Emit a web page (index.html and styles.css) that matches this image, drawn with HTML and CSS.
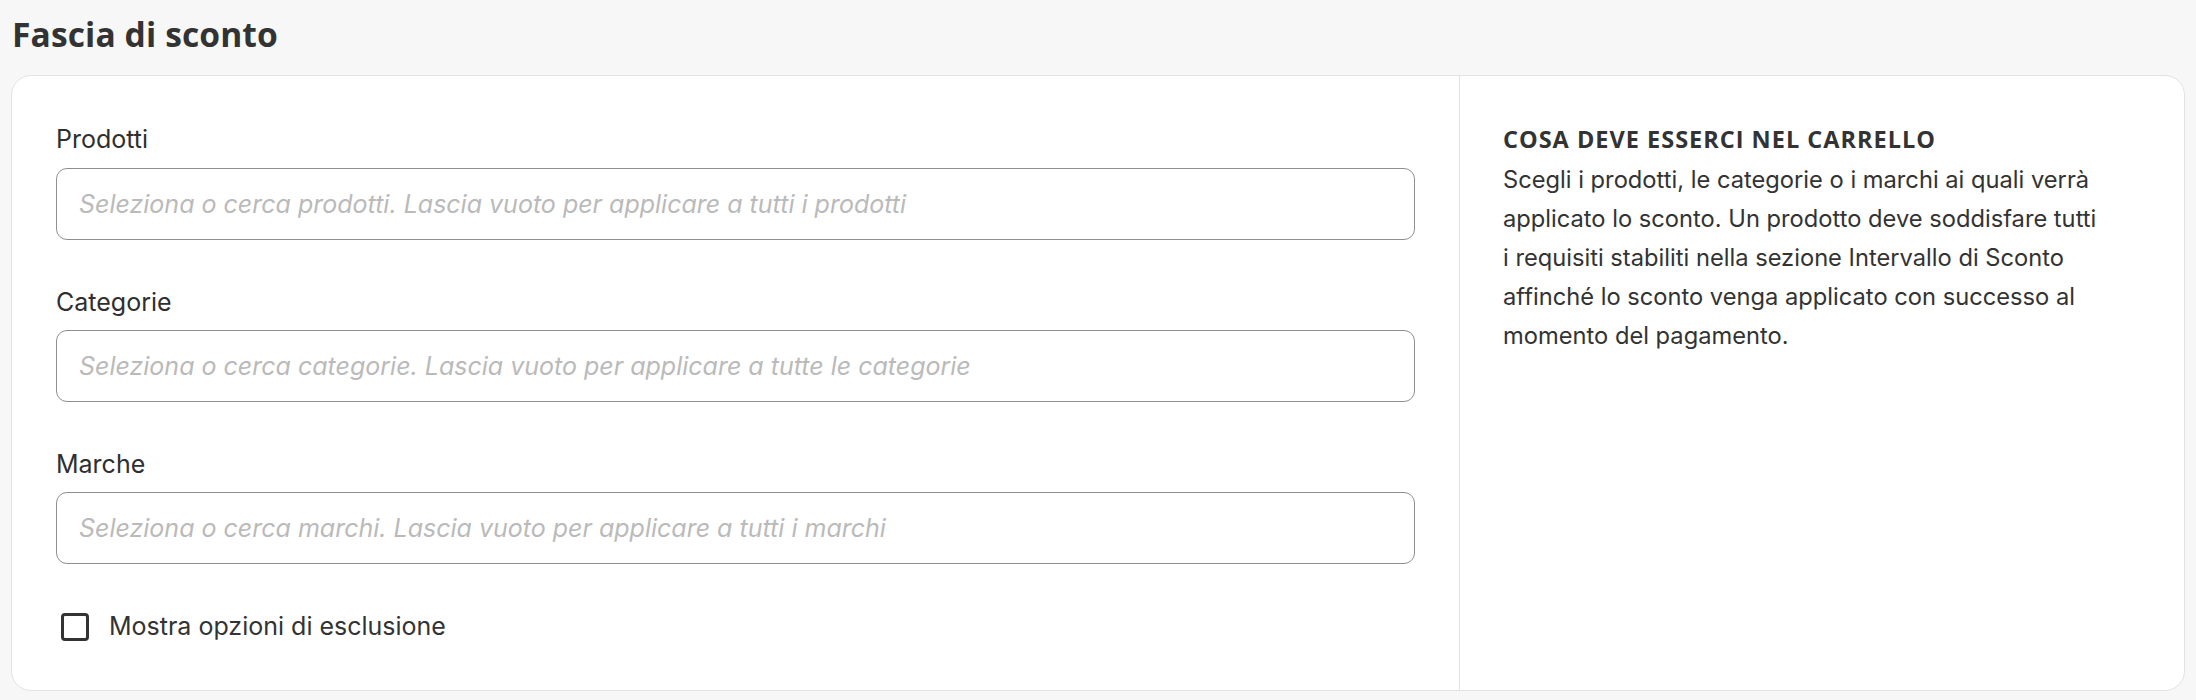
FILE: index.html
```html
<!DOCTYPE html>
<html lang="it">
<head>
    <meta charset="UTF-8">
    <meta name="viewport" content="width=device-width, initial-scale=1.0">
    <title>Fascia di sconto</title>
    <link rel="stylesheet" href="styles.css">
</head>
<body>
    <!-- Sezione fascia di sconto -->
    <h1 class="page-title">Fascia di sconto</h1>

    <section class="card">
        <div class="card-form">
            <div class="field">
                <label for="prodotti">Prodotti</label>
                <input type="text" id="prodotti" placeholder="Seleziona o cerca prodotti. Lascia vuoto per applicare a tutti i prodotti">
            </div>
            <div class="field">
                <label for="categorie">Categorie</label>
                <input type="text" id="categorie" placeholder="Seleziona o cerca categorie. Lascia vuoto per applicare a tutte le categorie">
            </div>
            <div class="field">
                <label for="marche">Marche</label>
                <input type="text" id="marche" placeholder="Seleziona o cerca marchi. Lascia vuoto per applicare a tutti i marchi">
            </div>
            <label class="check-row">
                <input type="checkbox" class="check-box">
                <span>Mostra opzioni di esclusione</span>
            </label>
        </div>

        <aside class="card-help">
            <h2>COSA DEVE ESSERCI NEL CARRELLO</h2>
            <p>Scegli i prodotti, le categorie o i marchi ai quali verrà<br>
            applicato lo sconto. Un prodotto deve soddisfare tutti<br>
            i requisiti stabiliti nella sezione Intervallo di Sconto<br>
            affinché lo sconto venga applicato con successo al<br>
            momento del pagamento.</p>
        </aside>
    </section>
</body>
</html>
```

FILE: styles.css
```css
body {
    font-family: Inter, "Noto Sans", sans-serif;
    font-size: 25px;
    line-height: 39.2px;
    color: #333;
    margin: 0;
    padding: 9px 11px 0;
    background-color: #f7f7f7;
}
.page-title {
    font-family: "Open Sans", sans-serif;
    font-size: 33.6px;
    font-weight: 700;
    line-height: 50.4px;
    letter-spacing: 0.1px;
    color: #333;
    margin: 0 0 16px 1px;
}
.card {
    display: grid;
    grid-template-columns: 1448px 1fr;
    background: #fff;
    border: 1px solid #e2e2e2;
    border-radius: 20px;
}
.card-form {
    display: flex;
    flex-direction: column;
    gap: 43px;
    padding: 44px;
    border-right: 1px solid #e2e2e2;
}
.field {
    display: flex;
    flex-direction: column;
    gap: 8px;
}
.field label {
    color: #2f2f2f;
}
.field input {
    height: 72px;
    box-sizing: border-box;
    padding: 0 22px;
    border: 1px solid #8f8f8f;
    border-radius: 11px;
    font-family: Inter, sans-serif;
    font-size: 25px;
    color: #333;
    background: #fff;
    outline: none;
}
.field input::placeholder {
    color: #bababa;
    font-style: italic;
}
.check-row {
    display: flex;
    align-items: center;
    gap: 20px;
    padding-left: 5px;
}
.check-box {
    appearance: none;
    width: 28px;
    height: 28px;
    margin: 0;
    border: 3px solid #333;
    border-radius: 4px;
    background: #fff;
}
.card-help {
    padding: 44px 20px 44px 43px;
    white-space: nowrap;
}
.card-help h2 {
    font-family: "Open Sans", sans-serif;
    font-size: 23.5px;
    font-weight: 700;
    line-height: 39.2px;
    letter-spacing: 1px;
    margin: 0;
}
.card-help p {
    font-size: 23.7px;
    margin: 0;
}
```
